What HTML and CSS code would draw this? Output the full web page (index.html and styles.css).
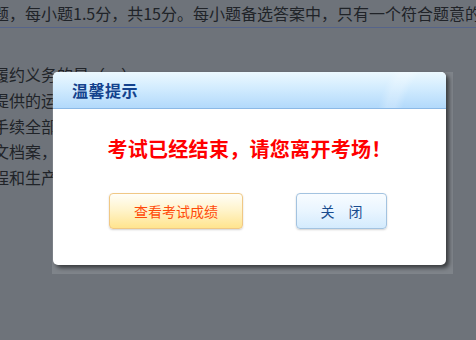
FILE: index.html
```html
<!DOCTYPE html>
<html lang="zh-CN">
<head>
<meta charset="utf-8">
<title>温馨提示</title>
<link rel="stylesheet" href="styles.css">
</head>
<body>
<div class="page">
  <div class="intro">题，每小题1.5分，共15分。每小题备选答案中，只有一个符合题意的正确答案。</div>
  <div class="question">
    <p class="line">履约义务的是（　）</p>
    <p class="line">提供的运输服务属于某一时段内履行的</p>
    <p class="line">手续全部办理完毕后确认收入</p>
    <p class="line">文档案，并于当日确认收入</p>
    <p class="line">程和生产进度确认收入</p>
  </div>
</div>

<div class="modal">
  <div class="modal-frame">
    <div class="dialog">
      <div class="dialog-head">
        <h2 class="dialog-title">温馨提示</h2>
      </div>
      <div class="dialog-body">
        <p class="message">考试已经结束，请您离开考场！</p>
        <div class="actions">
          <button class="btn btn-score" type="button">查看考试成绩</button>
          <button class="btn btn-close" type="button">关　闭</button>
        </div>
      </div>
    </div>
  </div>
</div>
</body>
</html>
```

FILE: styles.css
```css
html, body {
  margin: 0;
  padding: 0;
}

body {
  width: 476px;
  height: 340px;
  overflow: hidden;
  background: #6e737a;
  color: #202328;
  font-family: "Noto Sans CJK SC", "Noto Sans", "Liberation Sans", sans-serif;
  font-size: 16px;
}

.page {
  width: 600px;
  margin-left: -7px;
}

.intro {
  height: 27px;
  line-height: 27px;
  white-space: nowrap;
  border-bottom: 1px solid #56648a;
}

.question {
  margin-top: 34px;
}

.line {
  margin: 0;
  line-height: 25.75px;
  white-space: nowrap;
}

.modal {
  position: absolute;
  left: 52px;
  top: 72px;
}

.modal-frame {
  width: 401px;
  height: 202px;
  background: rgba(255, 255, 255, 0.12);
  padding-left: 1px;
  box-sizing: border-box;
}

.dialog {
  width: 393px;
  height: 193px;
  background: #fff;
  border-radius: 5px;
  box-shadow: 3px 3px 4px rgba(0, 0, 0, 0.55);
  overflow: hidden;
}

.dialog-head {
  height: 36px;
  border-bottom: 1px solid #8cb9e6;
  background:
    radial-gradient(circle at 437px 58px,
      rgba(255, 255, 255, 0) 90px,
      rgba(255, 255, 255, 0.22) 98px,
      rgba(255, 255, 255, 0.22) 106px,
      rgba(255, 255, 255, 0) 114px),
    linear-gradient(to bottom, #ecf9ff 0%, #cfeafe 50%, #b2d9fb 100%);
  display: flex;
  align-items: center;
  padding-left: 19px;
}

.dialog-title {
  margin: 0;
  font-size: 16px;
  font-weight: bold;
  color: #14428d;
  letter-spacing: 0.5px;
}

.dialog-body {
  padding-top: 27px;
}

.message {
  margin: 0;
  text-align: center;
  font-size: 20px;
  line-height: 26px;
  font-weight: bold;
  color: #ff0000;
  letter-spacing: 0.3px;
}

.actions {
  display: flex;
  gap: 53px;
  padding-left: 56px;
  margin-top: 31px;
}

.btn {
  height: 36px;
  border-radius: 4px;
  font-family: "Noto Sans CJK SC", "Noto Sans", sans-serif;
  font-size: 14px;
  padding: 0;
  box-shadow: 0 1px 2px rgba(0, 0, 0, 0.18);
}

.btn-score {
  width: 134px;
  border: 1px solid #f0c885;
  background: linear-gradient(to bottom, #fffef8 0%, #fff3c8 50%, #ffe48e 100%);
  color: #ff4a0a;
}

.btn-close {
  width: 91px;
  border: 1px solid #a3c3e0;
  background: linear-gradient(to bottom, #f8fcff 0%, #e9f5ff 50%, #d4ebfd 100%);
  color: #1a4c8e;
}
```
